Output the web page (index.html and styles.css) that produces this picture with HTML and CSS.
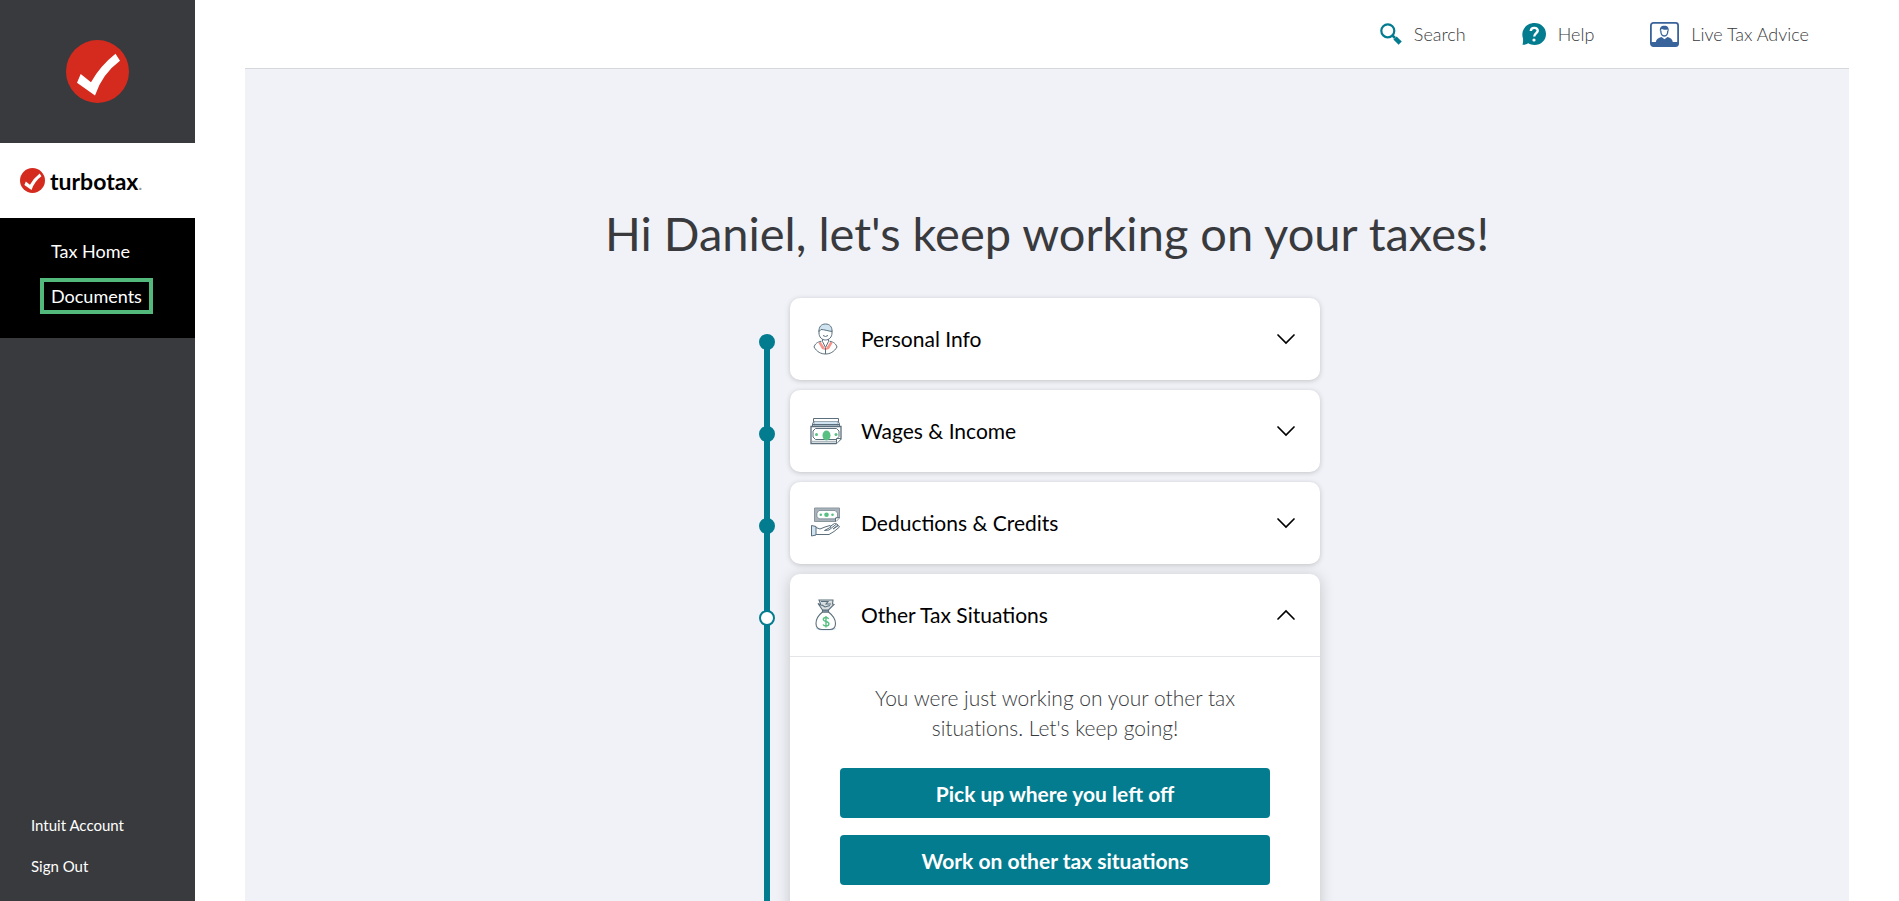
FILE: index.html
```html
<!DOCTYPE html>
<html lang="en">
<head>
  <meta charset="UTF-8" />
  <meta name="viewport" content="width=device-width, initial-scale=1.0"/>
  <title>TurboTax - Tax Home</title>
  <link rel="stylesheet" href="styles.css">
</head>
<body>
  <!-- shared symbols -->
  <svg class="symbols" aria-hidden="true">
    <symbol id="check-logo" viewBox="0 0 63 63">
      <circle cx="31.5" cy="31.5" r="31.5" fill="#d52b1e"/>
      <path d="M49.5 13.8L54 20.7Q36 34 29 55.5L11 42.7L14.7 34L25 42.3Q34 26 49.5 13.8Z" fill="#fff"/>
    </symbol>
    <symbol id="chevron" viewBox="0 0 20 12">
      <path d="M2 2L10 10L18 2" fill="none" stroke="#000" stroke-width="1.7" stroke-linecap="round"/>
    </symbol>
  </svg>

  <aside class="sidebar">
    <a class="logo" href="#" aria-label="Home"><svg width="63" height="63"><use href="#check-logo"/></svg></a>
    <a class="brand" href="#">
      <svg width="25" height="25"><use href="#check-logo"/></svg>
      <span class="brand-name">turbotax<span class="brand-dot">.</span></span>
    </a>
    <nav class="menu">
      <a href="#">Tax Home</a>
      <a href="#" class="highlight">Documents</a>
    </nav>
    <nav class="account">
      <a href="#">Intuit Account</a>
      <a href="#">Sign Out</a>
    </nav>
  </aside>

  <div class="page">
    <header class="topbar">
      <a href="#">
        <svg width="22" height="22" viewBox="0 0 22 22">
          <circle cx="7.8" cy="7.8" r="6.5" fill="none" stroke="#037c8f" stroke-width="2.2"/>
          <path d="M12.5 12.5L15 15" stroke="#037c8f" stroke-width="2.5"/>
          <path d="M15 15L20.2 20.2" stroke="#037c8f" stroke-width="4.5"/>
        </svg>
        Search
      </a>
      <a href="#">
        <svg width="24" height="22" viewBox="0 0 24 22">
          <path d="M12.5 0C19 0 24 4.7 24 11S19 22 12.5 22C10 22 8 21.3 6.3 20.3C4.5 21.5 2.5 22 0.5 21.7C1 20 1.2 18.500 1 15.5C-1.8 7 4.5 0 12.5 0Z" fill="#037c8f"/>
          <path d="M8.8 8C9 5.800 10.6 4.8 12.5 4.9C14.6 5 16 6.3 15.700 8C15.4 10 12.4 10.5 12.2 13.5" fill="none" stroke="#fff" stroke-width="2.4"/>
          <circle cx="12" cy="17" r="1.6" fill="#fff"/>
        </svg>
        Help
      </a>
      <a href="#">
        <svg width="29" height="25" viewBox="0 0 29 25">
          <rect x="0.9" y="0.9" width="27.2" height="23.2" rx="2.5" fill="#fff" stroke="#39639b" stroke-width="1.8"/>
          <path d="M1 20H5.8C6 17.3 8.5 16 11.5 15L14.5 17.3L17.5 15C20.5 16 22.5 17.3 22.8 20H28V24H1Z" fill="#39639b"/>
          <path d="M10.8 8.5C10.8 12 12.3 14 14.3 14S17.8 12 17.8 8.5" fill="none" stroke="#39639b" stroke-width="1.3"/>
          <path d="M10 9.5C9.3 5.8 11 3.8 14.3 3.8S19.3 5.8 18.6 9.5L17.5 7.5C15.5 8 13 7.8 11.8 6.8Z" fill="#39639b"/>
        </svg>
        Live Tax Advice
      </a>
    </header>

    <main class="content">
      <h1>Hi Daniel, let's keep working on your taxes!</h1>

      <ol class="steps">
        <li class="step">
          <span class="dot"></span>
          <section class="card">
            <button class="card-head" type="button" aria-expanded="false">
              <svg class="icon" width="32" height="32" viewBox="0 0 32 32" fill="none" stroke="#5b6f7c" stroke-width="1">
                <path d="M10.5 18.5L15.5 26L20.5 18.5L22.5 20L19 26L15.5 27L12 26L8.5 20Z" fill="#f6948a" stroke="none"/>
                <path d="M12.5 16V18.5L15.5 24.5L18.5 18.5V16" fill="#fff"/>
                <path d="M9 7.5V10C9 14 11.8 17 15.5 17S22 14 22 10V7.5" fill="#fff"/>
                <path d="M9 8.5C8.8 4 11 1 15.5 1S22.2 4 22 8.5C18 8 14 6.5 11 6.5Z" fill="#cfe3f0"/>
                <path d="M13 12.5Q15.5 14.5 18 12.5"/>
                <path d="M11.5 18.2C7 19 5 21 4 24C7 29 11 31 15.5 31S24 29 27 24C26 21 24 19 19.5 18.2M15.5 25V31"/>
              </svg>
              <span class="card-title">Personal Info</span>
              <svg class="chevron" width="20" height="12"><use href="#chevron"/></svg>
            </button>
          </section>
        </li>

        <li class="step">
          <span class="dot"></span>
          <section class="card">
            <button class="card-head" type="button" aria-expanded="false">
              <svg class="icon" width="32" height="32" viewBox="0 0 32 32" fill="none" stroke="#5b6f7c" stroke-width="1">
                <path d="M3.5 7V3.5H28.5V7" />
                <path d="M4 6.5H28V11H4Z" fill="#cfe3f0" stroke="#9aa8b0"/>
                <path d="M2.5 11V8.5L4 6.5M29.5 11V8.5L28 6.5M3 9.5H29"/>
                <path d="M1 11.5H31V24L26 28.5H1Z" fill="#fff" stroke-width="1.3"/>
                <path d="M5.5 13.5H26.5L29 16V21.5L26 24.5H5.5L3 22V16Z"/>
                <path d="M2 26.3H26" stroke="#9aa8b0"/>
                <path d="M31 23.5H26.5V28.5" fill="#fff"/>
                <ellipse cx="16.5" cy="20.5" rx="4" ry="5" fill="#58c082" stroke="none"/>
                <circle cx="6.5" cy="19.5" r="1.5" fill="#58c082" stroke="none"/>
                <circle cx="26" cy="19.5" r="1.5" fill="#58c082" stroke="none"/>
              </svg>
              <span class="card-title">Wages &amp; Income</span>
              <svg class="chevron" width="20" height="12"><use href="#chevron"/></svg>
            </button>
          </section>
        </li>

        <li class="step">
          <span class="dot"></span>
          <section class="card">
            <button class="card-head" type="button" aria-expanded="false">
              <svg class="icon" width="32" height="32" viewBox="0 0 32 32" fill="none" stroke="#5b6f7c" stroke-width="1">
                <path d="M4.5 1H29.5V11L26 14.5H4.5Z" fill="#a9b2b8" stroke="#8a979f"/>
                <path d="M9 3.5H25L27.5 6V9.5L25 11.8H9L7 9.5V6Z" fill="#fff" stroke-width=".6"/>
                <path d="M29.5 10.5L25.5 11V14.5" fill="#fff"/>
                <circle cx="16.5" cy="7.7" r="2.3" fill="#58c082" stroke="none"/>
                <circle cx="10.8" cy="7.7" r="1.3" fill="#58c082" stroke="none"/>
                <circle cx="22.5" cy="7.7" r="1.3" fill="#58c082" stroke="none"/>
                <path d="M1.5 18.5L6 19.5V28L1.5 29Z" fill="#cfe3f0"/>
                <path d="M6 20.5L10 22L15 20L20 18.5L21 20L14.5 23.5L19 23L26.5 17L28 18L23 22L28.5 18.5L29.5 20L24 24.5L19 27.5H6"/>
                <path d="M20 19.5L24.5 16.5L26.5 17"/>
              </svg>
              <span class="card-title">Deductions &amp; Credits</span>
              <svg class="chevron" width="20" height="12"><use href="#chevron"/></svg>
            </button>
          </section>
        </li>

        <li class="step open">
          <span class="dot"></span>
          <section class="card">
            <button class="card-head" type="button" aria-expanded="true">
              <svg class="icon" width="32" height="32" viewBox="0 0 32 32" fill="none" stroke="#5b6f7c" stroke-width="1.1">
                <ellipse cx="16" cy="29.5" rx="10" ry="2" fill="#cfe3f0" stroke="none"/>
                <path d="M12.5 13C8 16.5 6 20.5 6 24.5C6 28.5 8.5 30.5 12 30.5H20C23.5 30.5 25.5 28.5 25.5 24.5C25.5 20.5 23 16.5 18.5 13Z" fill="#fff"/>
                <path d="M12.5 11H18.5V13H12.5Z" fill="#9aa8b0"/>
                <path d="M12.5 11L8 4.5L11 6L9 1H23L22.5 5L24 5.5L18.5 11Z" fill="#d9dee1"/>
                <path d="M11 2.5H18L16 5H21M12 6L15 8L20 6.5"/>
                <path d="M18.7 19.8C18 18.8 17.2 18.5 16 18.5C14.4 18.5 13.3 19.2 13.3 20.5C13.3 23.2 18.9 21.8 18.9 24.8C18.9 26.2 17.7 27 16 27C14.6 27 13.6 26.5 13 25.5M16 17V28.5" stroke="#58c082" stroke-width="1.4"/>
              </svg>
              <span class="card-title">Other Tax Situations</span>
              <svg class="chevron" width="20" height="12"><use href="#chevron"/></svg>
            </button>
            <div class="card-body">
              <p>You were just working on your other tax situations. Let's keep going!</p>
              <button class="btn" type="button">Pick up where you left off</button>
              <button class="btn" type="button">Work on other tax situations</button>
            </div>
          </section>
        </li>
      </ol>
    </main>
  </div>
</body>
</html>
```
FILE: styles.css
```css
* {
  box-sizing: border-box;
}
body {
  margin: 0;
  height: 100vh;
  display: flex;
  overflow: hidden;
  font-family: Lato, "Open Sans", sans-serif;
  font-size: 18px;
  font-variant-ligatures: none;
  background-color: #fff;
  color: #393a3d;
}
a {
  color: inherit;
  text-decoration: none;
}
button {
  font-family: inherit;
  border: 0;
  cursor: pointer;
}
svg {
  flex: none;
}
.symbols {
  display: none;
}

/* left navigation */
.sidebar {
  flex: none;
  display: flex;
  flex-direction: column;
  width: 195px;
  background-color: #393a3d;
  color: #fff;
}
.logo {
  display: flex;
  justify-content: center;
  padding: 40px 0;
}
.brand {
  display: flex;
  align-items: center;
  gap: 5px;
  height: 75px;
  padding-left: 20px;
  background-color: #fff;
  color: #000;
}
.brand-name {
  font-size: 23px;
  font-weight: bold;
}
.brand-dot {
  color: #999;
  font-size: 15px;
}
.menu {
  display: flex;
  flex-direction: column;
  align-items: flex-start;
  gap: 9px;
  height: 120px;
  padding: 15px 40px;
  background-color: #000;
}
.menu a {
  padding: 4px 7px;
  border: 4px solid transparent;
  line-height: 20px;
}
.menu .highlight {
  border-color: #53b87b;
}
.account {
  display: flex;
  flex-direction: column;
  gap: 21px;
  margin-top: auto;
  padding: 0 31px 25px;
  font-size: 15px;
  line-height: 20px;
}

/* page area */
.page {
  flex: 1;
  display: flex;
  flex-direction: column;
  min-width: 0;
  margin: 0 50px;
}
.topbar {
  flex: none;
  display: flex;
  justify-content: flex-end;
  gap: 56px;
  height: 69px;
  padding-right: 40px;
  border-bottom: 1px solid #d4d7dc;
}
.topbar a {
  display: flex;
  align-items: center;
  gap: 12px;
  font-weight: 300;
}
.content {
  flex: 1;
  min-height: 0;
  background-color: #f1f2f7;
}
h1 {
  margin: 0;
  padding: 132px 0 33px;
  text-align: center;
  font-size: 47px;
  line-height: 64px;
  font-weight: normal;
}

/* steps with the timeline on the left */
.steps {
  position: relative;
  display: flex;
  flex-direction: column;
  gap: 10px;
  max-width: 576px;
  margin: 0 auto;
  padding: 0 15px 0 0;
  list-style: none;
}
.steps::before {
  content: "";
  position: absolute;
  top: 44px;
  bottom: 0;
  left: 5px;
  width: 6px;
  background-color: #037c8f;
}
.step {
  display: flex;
  gap: 15px;
}
.dot {
  position: relative;
  flex: none;
  width: 16px;
  height: 16px;
  margin-top: 36px;
  border: 2px solid #037c8f;
  border-radius: 50%;
  background-color: #037c8f;
}
.open .dot {
  background-color: #fff;
}
.card {
  flex: 1;
  border-radius: 10px;
  background-color: #fff;
  box-shadow: 0 1px 5px rgba(57, 58, 61, 0.25);
}
.open .card {
  box-shadow: 0 2px 14px rgba(57, 58, 61, 0.25);
}
.card-head {
  display: flex;
  align-items: center;
  gap: 19px;
  width: 100%;
  height: 82px;
  padding: 0 24px 0 20px;
  background: none;
  color: #000;
  text-align: left;
}
.card-title {
  flex: 1;
  font-size: 21px;
  line-height: 28px;
}
.open .chevron {
  transform: rotate(180deg);
}
.card-body {
  display: flex;
  flex-direction: column;
  gap: 17px;
  padding: 26px 50px 56px;
  border-top: 1px solid #e3e5e8;
}
.card-body p {
  margin: 0 0 8px;
  padding: 0 24px;
  text-align: center;
  font-size: 21px;
  line-height: 30px;
  font-weight: 300;
}
.btn {
  height: 50px;
  border-radius: 4px;
  background-color: #037c8f;
  color: #fff;
  font-size: 21px;
  font-weight: bold;
}
```
